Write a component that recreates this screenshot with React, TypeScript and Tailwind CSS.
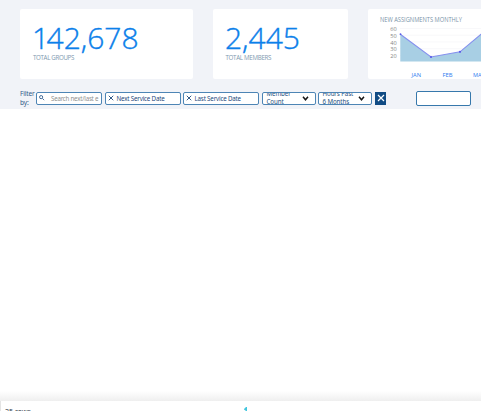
import React from 'react';

function Stat({ lead, value, label, className, labelClass }: { lead?: string; value: string; label: string; className: string; labelClass: string }) {
  return (
    <section className={`h-[70px] shrink-0 rounded-[2px] bg-white pl-[13px] pt-[12px] ${className}`}>
      <div className="-ml-px h-[33px] whitespace-nowrap font-['Open_Sans'] text-[30px] font-light leading-[33px] text-[#0b80ea] [-webkit-text-stroke:0.4px_#0b80ea]">
        {lead && <span className="tracking-[-2.6px]">{lead}</span>}{value}
      </div>
      <div className={`whitespace-nowrap font-['Open_Sans'] text-[6.2px] leading-[8px] text-[#7e98af] ${labelClass}`}>{label}</div>
    </section>
  );
}

const ticks = [60, 50, 40, 30, 20];

function Chart() {
  return (
    <section className="h-[70px] w-[180px] shrink-0 rounded-[2px] bg-white">
      <svg width="180" height="70" viewBox="0 0 180 70" fontFamily="'Open Sans', sans-serif">
        <text x="12" y="13.4" fontSize="6.4" fill="#7993a8" textLength="82" lengthAdjust="spacingAndGlyphs">NEW ASSIGNMENTS MONTHLY</text>
        {ticks.map((t, i) => (
          <g key={t}>
            <text x="28.7" y={22 + i * 6.75} fontSize="5.6" fill="#868686" textAnchor="end">{t}</text>
            <path d={`M32 ${19.5 + i * 6.75}H180`} stroke="#f3f4f6" strokeWidth=".6" />
          </g>
        ))}
        <path d="M32.3 25.2L63 48L92 42.8L118 21V52.5H32.3Z" fill="#a8cfe4" />
        <path d="M32.3 25.2L63 48L92 42.8L118 21" fill="none" stroke="#8590ee" strokeWidth="1.1" />
        <circle cx="32.5" cy="25.2" r=".9" fill="#5959e8" />
        <circle cx="63" cy="48" r="1.1" fill="#5959e8" />
        <circle cx="92" cy="42.8" r="1.1" fill="#5959e8" />
        <g fontSize="5.6" fill="#2f7cf0">
          <text x="43.5" y="68" textLength="9.5" lengthAdjust="spacingAndGlyphs">JAN</text>
          <text x="74.5" y="68" textLength="10" lengthAdjust="spacingAndGlyphs">FEB</text>
          <text x="105" y="68" textLength="12" lengthAdjust="spacingAndGlyphs">MAR</text>
        </g>
      </svg>
    </section>
  );
}

function Cross({ className }: { className: string }) {
  return (
    <svg viewBox="0 0 8 8" className={className} fill="none" stroke="currentColor" strokeWidth="1.2">
      <path d="M1 1L7 7M7 1L1 7" />
    </svg>
  );
}

function DateFilter({ label, className }: { label: string; className: string }) {
  return (
    <button className={`flex h-[13px] shrink-0 items-center rounded-[2px] border border-[#4d85b5] bg-white pl-[1.5px] text-[#1d497c] ${className}`}>
      <Cross className="size-[6px]" />
      <span className="ml-[3px] whitespace-nowrap pt-[1px] text-[6.2px] leading-[8px] tracking-[-0.18px]">{label}</span>
    </button>
  );
}

function SelectFilter({ first, second, className }: { first: string; second: string; className: string }) {
  return (
    <button className={`flex h-[13px] w-[54px] shrink-0 items-center justify-between overflow-hidden rounded-[2px] border border-[#4d85b5] bg-white pl-[3.5px] pr-[6px] text-left text-[#24507e] ${className}`}>
      <span className="whitespace-nowrap text-[6.2px] leading-[8.5px] tracking-[-0.1px]">{first}<br />{second}</span>
      <svg viewBox="0 0 8 6" className="h-[5px] w-[7px]" fill="none" stroke="#151515" strokeWidth="1.8"><path d="M1 1L4 4.5L7 1" /></svg>
    </button>
  );
}

export default function App() {
  return (
    <main className="flex h-[411px] w-[481px] flex-col overflow-hidden bg-white font-['Noto_Sans',sans-serif]">
      <header className="h-[109px] shrink-0 bg-[#f1f3f8] pl-[20px] pt-[9px]">
        <div className="flex">
          <Stat lead="1" value="42,678" label="TOTAL GROUPS" className="w-[173px]" labelClass="tracking-[-0.34px]" />
          <Stat value="2,445" label="TOTAL MEMBERS" className="ml-[20px] w-[135px]" labelClass="tracking-[-0.3px] -ml-[0.5px]" />
          <div className="ml-[20px]"><Chart /></div>
        </div>
        <div className="mt-[9px] flex h-[20px] items-center">
          <label className="w-[16px] shrink-0 whitespace-nowrap text-[6.6px] leading-[9px] tracking-[-0.2px] text-[#315b88]">Filter<br />by:</label>
          <div className="flex h-[13px] w-[66px] shrink-0 items-center overflow-hidden rounded-[2px] border border-[#4d85b5] bg-white pl-[2px]">
            <svg viewBox="0 0 8 8" className="size-[5.5px] shrink-0" fill="none" stroke="#315f91" strokeWidth="1.3"><circle cx="3.1" cy="3.1" r="2.3" /><path d="M5 5L7.5 7.5" /></svg>
            <span className="ml-[6.5px] whitespace-nowrap pt-[1px] text-[6.2px] leading-[9px] tracking-[-0.24px] text-[#909090]">Search next/last e</span>
          </div>
          <DateFilter label="Next Service Date" className="ml-[3px] w-[76px]" />
          <DateFilter label="Last Service Date" className="ml-[2px] w-[76px]" />
          <SelectFilter first="Member" second="Count" className="ml-[3px]" />
          <SelectFilter first="Hours Past" second="6 Months" className="ml-[2px]" />
          <button className="ml-[3px] flex h-[13px] w-[11px] shrink-0 items-center justify-center bg-[#104b84] text-white"><Cross className="size-[8px]" /></button>
          <input className="ml-[30px] h-[15px] w-[55px] shrink-0 rounded-[2px] border border-[#3778ac] bg-white outline-none" aria-label="Filter value" />
        </div>
      </header>
      <div className="flex-1 bg-white" />
      <div className="h-[10px] shrink-0 bg-gradient-to-b from-white to-[#efefef]" />
      <footer className="flex h-[10px] shrink-0 overflow-hidden border-l border-[#e4e4e4] bg-white pl-[4px] pt-[5px] text-[7.1px] leading-[10px] text-[#303846]">
        <span className="w-[239px] whitespace-nowrap">25 rows</span>
        <svg viewBox="0 0 3 4" className="mt-[1px] h-[4px] w-[3px] shrink-0"><path d="M0 2L2 0H3V4H2L0 2.5Z" fill="#43c6de" /></svg>
      </footer>
    </main>
  );
}
